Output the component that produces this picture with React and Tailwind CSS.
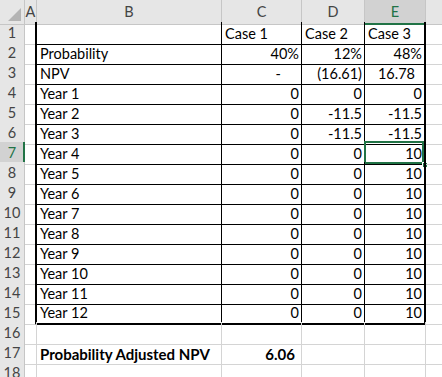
import React from 'react';

// Sheet layout: row header + columns A..F (F runs past the window edge, so no letter shows)
const COLS = ['A', 'B', 'C', 'D', 'E', 'F'];

const yearRows = [
  [0, 0, 0],
  [0, -11.5, -11.5],
  [0, -11.5, -11.5],
  [0, 0, 10],
  [0, 0, 10],
  [0, 0, 10],
  [0, 0, 10],
  [0, 0, 10],
  [0, 0, 10],
  [0, 0, 10],
  [0, 0, 10],
  [0, 0, 10],
];

const rows = [
  { B: '', C: 'Case 1', D: 'Case 2', E: 'Case 3', left: true },
  { B: 'Probability', C: '40%', D: '12%', E: '48%' },
  { B: 'NPV', C: '-', D: '(16.61)', E: '16.78', acct: true },
  ...yearRows.map((v, i) => ({ B: `Year ${i + 1}`, C: String(v[0]), D: String(v[1]), E: String(v[2]) })),
  {},
  { B: 'Probability Adjusted NPV', C: '6.06', bold: true },
  {},
];

const SELECTED_ROW = 7;
const SELECTED_COL = 'E';

function HeaderRow() {
  return (
    <div className="grid grid-cols-[25px_12px_185px_80px_63px_61px_64px] h-[22px]">
      <div className="relative bg-[#e6e6e6] border-r border-b border-[#c6c6c6]">
        <div className="absolute right-[3px] bottom-[3px] w-0 h-0 border-l-[13px] border-l-transparent border-b-[13px] border-b-[#b4b4b4]" />
      </div>
      {COLS.map((c) =>
        c === SELECTED_COL ? (
          <div key={c} className="flex items-center justify-center bg-[#d2d2d2] border-r border-[#c6c6c6] border-b-2 border-b-[#217346] text-[#217346] pt-[1px]">
            {c}
          </div>
        ) : (
          <div key={c} className="flex items-center justify-center bg-[#e6e6e6] border-r border-b border-[#c6c6c6] text-[#444]">
            {c === 'F' ? '' : c}
          </div>
        )
      )}
    </div>
  );
}

function RowHeader({ n }) {
  if (n === SELECTED_ROW) {
    return (
      <div className="flex items-center justify-center bg-[#d2d2d2] border-r-2 border-r-[#217346] border-b border-b-[#c6c6c6] text-[#217346] pl-[1px]">
        {n}
      </div>
    );
  }
  return (
    <div className="flex items-center justify-center bg-[#e6e6e6] border-r border-b border-[#c6c6c6] text-[#444]">
      {n}
    </div>
  );
}

function tableCellClass(n, c) {
  const inTable = n <= 15;
  const last = n === 15;
  if (c === 'A') {
    return inTable ? 'border-r-2 border-r-black border-b border-b-[#d4d4d4]' : 'border-r border-b border-[#d4d4d4]';
  }
  if (c === 'F') return 'border-r border-b border-[#d4d4d4]';
  if (!inTable) return 'border-r border-b border-[#d4d4d4]';
  if (c === 'E') {
    return last ? 'border-r-2 border-b-2 border-black' : 'border-r-2 border-b border-black';
  }
  return last ? 'border-r border-b-2 border-black' : 'border-r border-b border-black';
}

function Row({ n, data }) {
  return (
    <div className="grid grid-cols-[25px_12px_185px_80px_63px_61px_64px] h-[20px]">
      <RowHeader n={n} />
      {COLS.map((c) => {
        const value = data[c] ?? '';
        const isLabel = c === 'B' || data.left;
        const selected = n === SELECTED_ROW && c === SELECTED_COL;
        let pad = 'pr-[2px]';
        if (data.acct && c === 'C') pad = 'pr-[20px]';
        if (data.acct && c === 'E') pad = 'pr-[9px]';
        if (data.bold && c === 'C') pad = 'pr-[6px]';
        return (
          <div
            key={c}
            className={`relative flex items-end pb-[1px] leading-[18px] ${tableCellClass(n, c)} ${
              isLabel ? 'justify-start pl-[3px]' : `justify-end ${pad}`
            } ${data.bold ? 'font-bold text-[15px]' : ''}`}
          >
            <span className="whitespace-nowrap">{value}</span>
            {selected && (
              <>
                <div className="absolute -left-[1px] -top-[1px] right-0 bottom-0 border-2 border-[#217346]" />
                <div className="absolute -right-[4px] -bottom-[4px] w-[6px] h-[6px] bg-[#217346] border border-white" />
              </>
            )}
          </div>
        );
      })}
    </div>
  );
}

export default function App() {
  return (
    <div className="w-[442px] h-[377px] overflow-hidden bg-white text-black text-[14.5px] font-[Lato,sans-serif]">
      {/* header + rows; the grid is wider than the window and gets clipped */}
      <div className="w-[490px]">
        <HeaderRow />
        {rows.map((r, i) => (
          <Row key={i} n={i + 1} data={r} />
        ))}
      </div>
    </div>
  );
}
